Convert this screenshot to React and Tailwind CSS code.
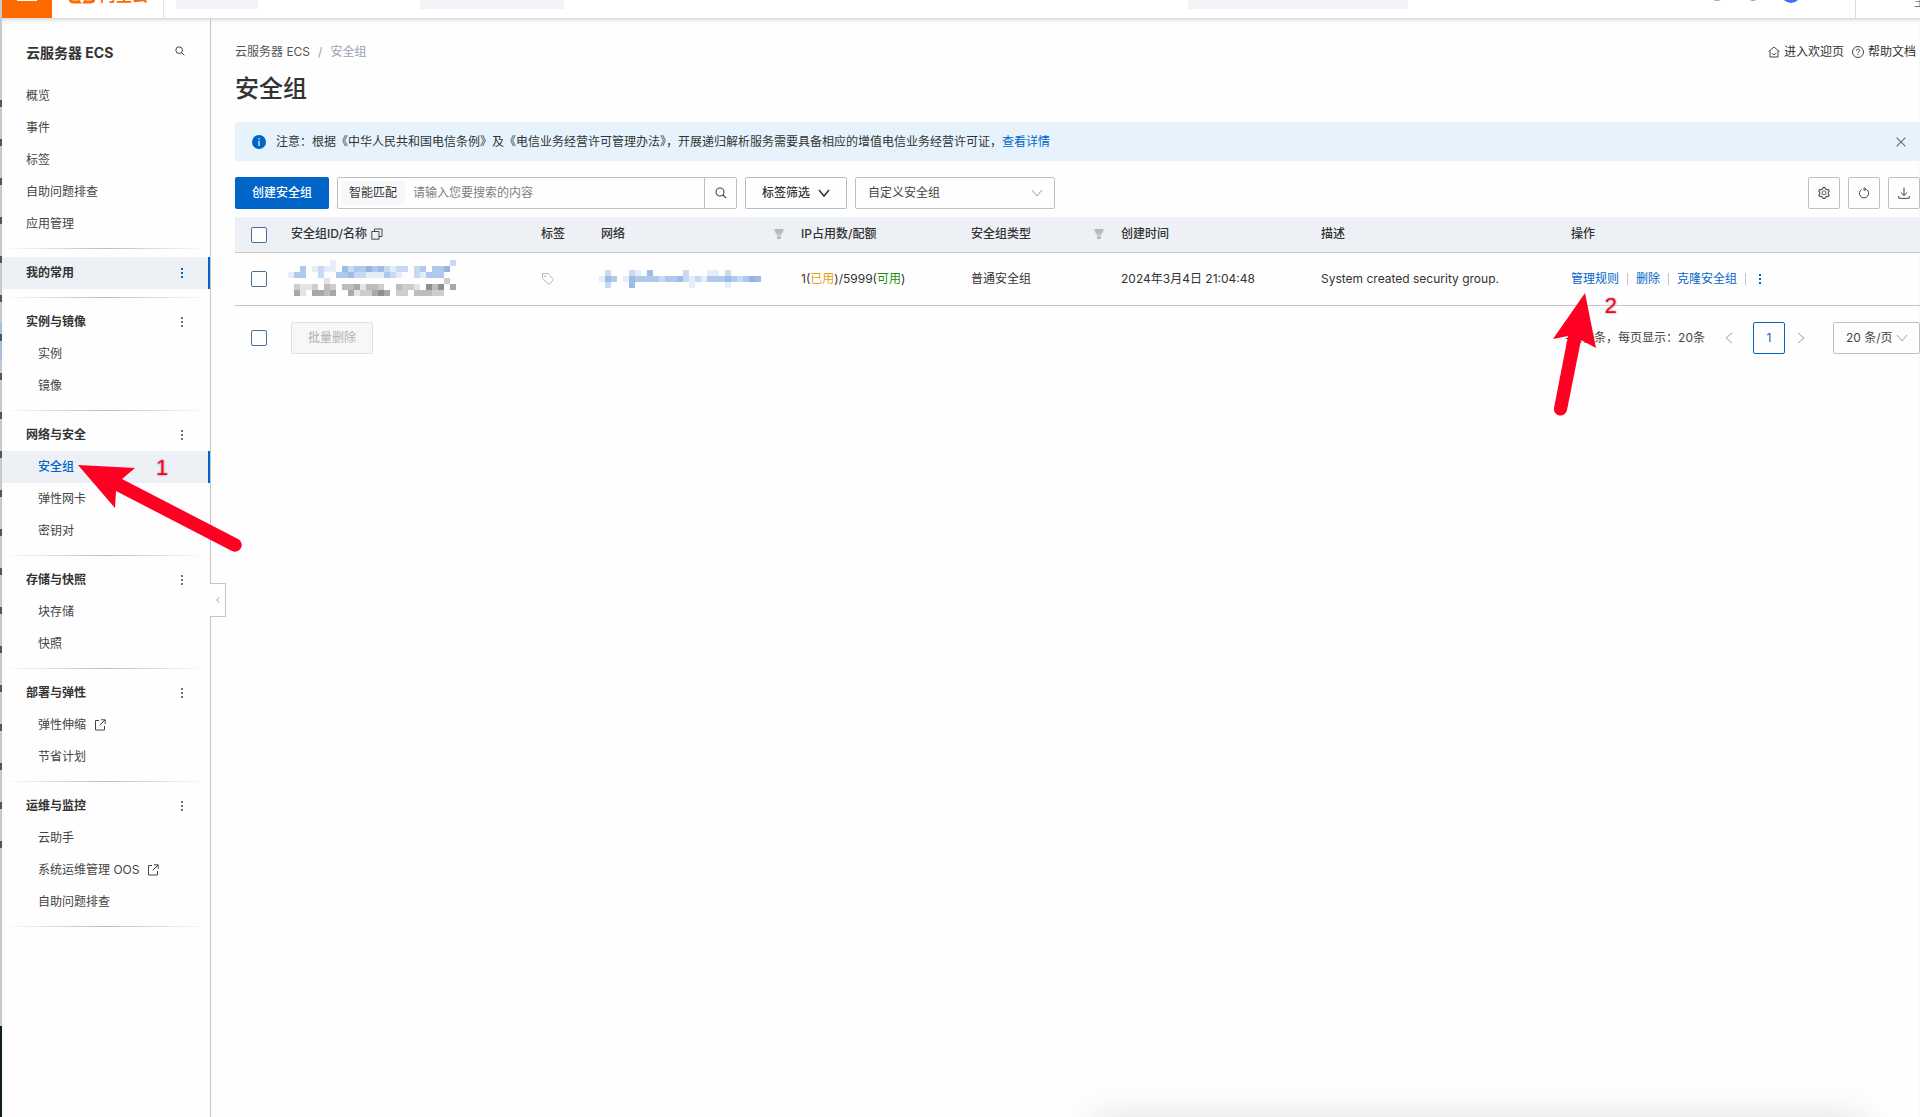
import { useState } from 'react'
import { AiOutlineSetting } from 'react-icons/ai'

const navGroups = [
  {
    items: [
      { label: '概览' },
      { label: '事件' },
      { label: '标签' },
      { label: '自助问题排查' },
      { label: '应用管理' },
    ],
  },
  { title: '我的常用', highlighted: true, items: [] },
  { title: '实例与镜像', items: [{ label: '实例' }, { label: '镜像' }] },
  {
    title: '网络与安全',
    items: [{ label: '安全组', active: true }, { label: '弹性网卡' }, { label: '密钥对' }],
  },
  { title: '存储与快照', items: [{ label: '块存储' }, { label: '快照' }] },
  { title: '部署与弹性', items: [{ label: '弹性伸缩', external: true }, { label: '节省计划' }] },
  {
    title: '运维与监控',
    items: [{ label: '云助手' }, { label: '系统运维管理 OOS', external: true }, { label: '自助问题排查' }],
  },
]

// Pixelated id cells: one string per row, one digit per 6px cell (0 = empty)
const idCells = [
  '0000000100000000000000000002',
  '0030121104233534212202303350',
  '1330020033422111321002133300',
]
const nameCells = [
  '0000001000000000000000000020',
  '0211203203341332003221053504',
  '0410443400412245402203332200',
]
const networkCells = [
  '020002104000002000110200000',
  '143014333323342121333432354',
  '020004000000000100000100000',
]

const blueScale = ['', '#e4edf9', '#c8d9f3', '#b0c8ec', '#9dbce8', '#92b4e5']
const grayScale = ['', '#e4e4e4', '#cdcdcd', '#bcbcbc', '#a8a8a8', '#8e8e8e']

function Mosaic({ cells, scale }) {
  return (
    <svg width={cells[0].length * 6} height={cells.length * 6} className="block" aria-hidden="true">
      {cells.map((row, y) =>
        row.split('').map((level, x) =>
          level === '0' ? null : (
            <rect key={`${x}-${y}`} x={x * 6} y={y * 6} width="6" height="6" fill={scale[Number(level)]} />
          )
        )
      )}
    </svg>
  )
}

function SearchIcon({ size = 12 }) {
  return (
    <svg width={size} height={size} viewBox="0 0 12 12" fill="none" stroke="currentColor" strokeWidth="1.1">
      <circle cx="5" cy="5" r="4" />
      <path d="M8 8l3.2 3.2" />
    </svg>
  )
}

function Chevron({ direction = 'down', size = 12, strokeWidth = 1 }) {
  const paths = {
    down: 'M1 3l5 6 5-6',
    left: 'M9 1L3 6l6 5',
    right: 'M3 1l6 5-6 5',
  }
  return (
    <svg width={size} height={size} viewBox="0 0 12 12" fill="none" stroke="currentColor" strokeWidth={strokeWidth}>
      <path d={paths[direction]} />
    </svg>
  )
}

function Dots({ className }) {
  return (
    <svg width="2" height="10" viewBox="0 0 2 10" className={className} fill="currentColor">
      <rect width="2" height="2" />
      <rect y="4" width="2" height="2" />
      <rect y="8" width="2" height="2" />
    </svg>
  )
}

function ExternalIcon() {
  return (
    <svg width="12" height="12" viewBox="0 0 12 12" fill="none" stroke="currentColor">
      <path d="M5 1.5H1.5v9.5H10.5V7M7 .8h4.2V5M11 1L5.8 6.2" />
    </svg>
  )
}

function FilterIcon() {
  return (
    <svg width="10" height="10" viewBox="0 0 10 10" fill="#b9b9b9">
      <path d="M0 0h10L8 4.800H2zM2.800 5h4.400v1.500H2.800zM3 7.200h4V10H3z" />
    </svg>
  )
}

function Checkbox({ label }) {
  return (
    <input
      type="checkbox"
      aria-label={label}
      className="block size-4 appearance-none rounded-xs border border-[#4a7099] bg-white checked:bg-[#0064c8]"
    />
  )
}

function TopBar() {
  return (
    <header className="relative z-10 h-[19px] overflow-hidden border-b border-[#dcdcdc] bg-white">
      <div className="-mt-8 flex h-[50px] items-center">
        <button aria-label="菜单" className="flex size-[50px] shrink-0 items-center justify-center bg-[#ff6a00]">
          <svg width="20" height="16" viewBox="0 0 20 16" fill="#fff">
            <rect width="20" height="2" />
            <rect y="7" width="20" height="2" />
            <rect y="14" width="20" height="2" />
          </svg>
        </button>
        <div className="flex h-full w-28 shrink-0 items-center gap-1 border-r border-[#e3e3e3] pt-1 pl-4 text-[#ff6a00]">
          <svg width="28" height="18" viewBox="0 0 28 18" fill="none" stroke="currentColor" strokeWidth="3">
            <path d="M11 2H6C3.500 2 2 4 2 6v6c0 2.500 1.500 4 4 4h5l-1-1.500M17 2h5c2.500 0 4 2 4 4v6c0 2.500-1.500 4-4 4h-5l1-1.500" />
          </svg>
          <span className="text-base font-bold whitespace-nowrap">阿里云</span>
        </div>
        <div className="ml-3 h-8 w-[82px] shrink-0 bg-[#f2f3f6]" />
        <div className="ml-[162px] h-8 w-36 shrink-0 bg-[#f2f3f6]" />
        <div className="ml-auto h-8 w-[220px] shrink-0 bg-[#f2f3f6]" />
        <div className="ml-[301px] size-4 shrink-0 rounded-full border border-gray-400" />
        <div className="ml-5 size-4 shrink-0 rounded-full border border-gray-400" />
        <div className="ml-5 size-5 shrink-0 rounded-full bg-[#3f6bff]" />
        <div className="ml-[54px] flex h-full w-[65px] shrink-0 items-end overflow-hidden border-l border-[#dcdcdc] pb-2 pl-[58px] text-xs text-gray-500">
          <span className="whitespace-nowrap">主</span>
        </div>
      </div>
    </header>
  )
}

function NavGroup({ group }) {
  const titleClass = group.highlighted
    ? 'border-r-2 border-[#0064c8] bg-[#edf0f5]'
    : 'border-r-2 border-transparent'

  return (
    <section>
      {group.title && (
        <div className={`flex h-8 items-center justify-between pr-[25px] pl-6 ${titleClass}`}>
          <h2 className="font-bold text-[#333]">{group.title}</h2>
          <button aria-label={`${group.title}更多`} className={group.highlighted ? 'text-[#0064c8]' : 'text-gray-500'}>
            <Dots />
          </button>
        </div>
      )}
      <ul>
        {group.items.map(item => (
          <li key={item.label}>
            <a
              href="#"
              className={`flex h-8 items-center gap-2 border-r-2 ${group.title ? 'pl-9' : 'pl-6'} ${
                item.active ? 'border-[#0064c8] bg-[#edf0f5] font-medium text-[#0064c8]' : 'border-transparent text-[#444]'
              }`}
            >
              {item.label}
              {item.external && <ExternalIcon />}
            </a>
          </li>
        ))}
      </ul>
    </section>
  )
}

function Sidebar() {
  return (
    <aside className="relative w-[209px] shrink-0 border-r border-[#c4c4c4]">
      <div className="flex items-center justify-between pt-[19px] pr-[25px] pb-3 pl-6">
        <h1 className="text-sm leading-[30px] font-bold text-[#333]">云服务器 ECS</h1>
        <button aria-label="搜索" className="pb-1 text-[#333]">
          <SearchIcon size={10} />
        </button>
      </div>
      <nav>
        {navGroups.map((group, index) => (
          <div key={index}>
            <div className={index === 0 ? 'pb-2' : 'py-2'}>
              <NavGroup group={group} />
            </div>
            <div className="h-px bg-linear-to-r from-transparent via-[#bdbdbd] to-transparent" />
          </div>
        ))}
      </nav>
      <button
        aria-label="收起"
        className="absolute top-[564px] left-full flex h-[34px] w-4 items-center justify-center border border-l-0 border-[#c4c4c4] bg-white text-gray-400"
      >
        <Chevron direction="left" size={6} strokeWidth={2} />
      </button>
    </aside>
  )
}

function PageHeader() {
  return (
    <div className="pt-[23px]">
      <div className="flex items-center justify-between pr-1">
        <nav className="flex gap-2 leading-5 text-[#555]">
          <a href="#">云服务器 ECS</a>
          <span className="text-gray-400">/</span>
          <span className="text-gray-400">安全组</span>
        </nav>
        <div className="flex gap-2 leading-5 text-[#333]">
          <a href="#" className="flex items-center gap-1">
            <svg width="12" height="12" viewBox="0 0 12 12" fill="none" stroke="currentColor" strokeWidth="0.9">
              <path d="M.6 5.600L6 1l5.400 4.600M2 4.800v6.200h8V4.800M4 7.200c.6 1.800 3.400 1.800 4 0" />
            </svg>
            进入欢迎页
          </a>
          <a href="#" className="flex items-center gap-1">
            <svg width="12" height="12" viewBox="0 0 12 12" fill="none" stroke="currentColor" strokeWidth="0.9">
              <circle cx="6" cy="6" r="5.500" />
              <path d="M4.300 4.800c0-2.300 3.400-2.200 3.400-.1C7.700 6 6 6 6 7.300M6 8.200v1" />
            </svg>
            帮助文档
          </a>
        </div>
      </div>
      <h2 className="mt-[11px] text-2xl leading-8 font-medium text-[#333]">安全组</h2>
    </div>
  )
}

function Notice({ onClose }) {
  return (
    <div className="mt-[17px] flex h-[39px] items-center rounded-xs bg-[#e6f3fd] pr-3 pl-[17px] text-[#333]">
      <svg width="14" height="14" viewBox="0 0 14 14" className="mr-[10px] shrink-0">
        <circle cx="7" cy="7" r="7" fill="#0064c8" />
        <path d="M6.300 3h1.400v1.500H6.300zM6.300 5.700h1.400V11H6.300z" fill="#d5e8fa" />
      </svg>
      <p className="flex-1">
        注意：根据《中华人民共和国电信条例》及《电信业务经营许可管理办法》，开展递归解析服务需要具备相应的增值电信业务经营许可证，
        <a href="#" className="text-[#0064c8]">查看详情</a>
      </p>
      <button aria-label="关闭" onClick={onClose} className="p-0.5 text-gray-500">
        <svg width="10" height="10" viewBox="0 0 10 10" fill="none" stroke="currentColor" strokeWidth="1.3">
          <path d="M.6.6l8.800 8.800M9.400.6L.6 9.400" />
        </svg>
      </button>
    </div>
  )
}

function Toolbar() {
  const iconButton = 'flex size-8 items-center justify-center rounded-xs border border-[#c0c0c0] text-[#444]'

  return (
    <div className="mt-4 flex items-center gap-2">
      <button className="h-8 rounded-xs bg-[#0064c8] px-[17px] font-medium text-white">创建安全组</button>
      <div className="flex h-8 w-[400px] rounded-xs border border-[#c0c0c0]">
        <label htmlFor="keyword" className="m-[3px] flex w-16 items-center justify-center bg-[#f7f8fa] text-[#333]">
          智能匹配
        </label>
        <input
          id="keyword"
          type="text"
          placeholder="请输入您要搜索的内容"
          className="min-w-0 flex-1 px-[5px] outline-none placeholder:text-[#808080]"
        />
        <button aria-label="搜索" className="flex w-8 items-center justify-center border-l border-[#c0c0c0] text-[#444]">
          <SearchIcon />
        </button>
      </div>
      <button className="flex h-8 items-center gap-2 rounded-xs border border-[#b4bcc8] px-4 font-medium text-[#333]">
        标签筛选
        <Chevron strokeWidth={1.5} />
      </button>
      <div className="relative w-[200px] text-[#444]">
        <select aria-label="安全组类型" className="h-8 w-full appearance-none rounded-xs border border-[#c0c0c0] px-3">
          <option>自定义安全组</option>
        </select>
        <span className="pointer-events-none absolute top-2.5 right-3 text-gray-400">
          <Chevron size={12} />
        </span>
      </div>
      <div className="ml-auto flex gap-2">
        <button aria-label="设置" className={iconButton}>
          <AiOutlineSetting size={14} />
        </button>
        <button aria-label="刷新" className={iconButton}>
          <svg width="12" height="12" viewBox="0 0 12 12" fill="none" stroke="currentColor">
            <path d="M3.600 2.400A4.600 4.600 0 1 0 8.600 2.500M5 2.200h3L6.300.4M8 2.200L6.300 4" />
          </svg>
        </button>
        <button aria-label="下载" className={iconButton}>
          <svg width="12" height="12" viewBox="0 0 12 12" fill="none" stroke="currentColor">
            <path d="M6 .5v8M2.800 5.400L6 8.500l3.200-3.100M.8 9v2.300h10.400V9" />
          </svg>
        </button>
      </div>
    </div>
  )
}

function GroupTable() {
  const th = 'px-2 pb-px text-left font-medium'

  return (
    <table className="mt-2 w-full table-fixed border-separate border-spacing-0 text-[#333]">
      <colgroup>
        <col className="w-12" />
        <col className="w-[250px]" />
        <col className="w-[60px]" />
        <col className="w-[200px]" />
        <col className="w-[170px]" />
        <col className="w-[150px]" />
        <col className="w-[200px]" />
        <col className="w-[250px]" />
        <col />
      </colgroup>
      <thead>
        <tr className="h-9 bg-[#edf0f5] *:border-b *:border-[#c4c4c4]">
          <th className="pl-4">
            <Checkbox label="全选" />
          </th>
          <th className={th}>
            <span className="flex items-center gap-1">
              安全组ID/名称
              <svg width="12" height="12" viewBox="0 0 12 12" fill="none" stroke="currentColor" strokeWidth="0.9">
                <path d="M3.500 3.500V1h7.500v7.500H8M.8 3.500H8v7.700H.8z" />
              </svg>
            </span>
          </th>
          <th className={th}>标签</th>
          <th className={th}>
            <span className="flex items-center justify-between pr-px">
              网络
              <FilterIcon />
            </span>
          </th>
          <th className={th}>IP占用数/配额</th>
          <th className={th}>
            <span className="flex items-center justify-between pr-px">
              安全组类型
              <FilterIcon />
            </span>
          </th>
          <th className={th}>创建时间</th>
          <th className={th}>描述</th>
          <th className={th}>操作</th>
        </tr>
      </thead>
      <tbody>
        <tr className="h-[53px] *:border-b *:border-[#c4c4c4]">
          <td className="pl-4">
            <Checkbox label="选择安全组" />
          </td>
          <td className="pb-[3px] pl-[5px]">
            <Mosaic cells={idCells} scale={blueScale} />
            <Mosaic cells={nameCells} scale={grayScale} />
          </td>
          <td className="px-2">
            <svg width="14" height="14" viewBox="0 0 14 14" fill="none" stroke="#b5b5b5">
              <path d="M1.500 1.500h5.500l5.500 6-4.500 5-6.500-6z" />
              <circle cx="4.300" cy="4.300" r=".6" />
            </svg>
          </td>
          <td className="pl-1.5">
            <Mosaic cells={networkCells} scale={blueScale} />
          </td>
          <td className="px-2">
            1(<span className="text-[#e6a117]">已用</span>)/5999(<span className="text-[#1e8e0e]">可用</span>)
          </td>
          <td className="px-2">普通安全组</td>
          <td className="px-2">2024年3月4日 21:04:48</td>
          <td className="px-2">System created security group.</td>
          <td className="px-2">
            <div className="flex items-center gap-2 text-[#0064c8]">
              <a href="#">管理规则</a>
              <span className="h-3 w-px bg-[#c4c4c4]" />
              <a href="#">删除</a>
              <span className="h-3 w-px bg-[#c4c4c4]" />
              <a href="#">克隆安全组</a>
              <span className="h-3 w-px bg-[#c4c4c4]" />
              <button aria-label="更多操作" className="px-[5px]">
                <Dots />
              </button>
            </div>
          </td>
        </tr>
      </tbody>
    </table>
  )
}

function TableFooter() {
  return (
    <div className="mt-4 flex h-8 items-center pl-4 text-[#444]">
      <Checkbox label="全选当前页" />
      <button disabled className="ml-6 h-8 rounded-xs border border-[#e0e0e0] bg-[#f7f7f7] px-4 text-[#b0b0b0]">
        批量删除
      </button>
      <span className="ml-auto">共有1条，每页显示：20条</span>
      <button aria-label="上一页" className="ml-[18px] text-gray-400">
        <Chevron direction="left" size={12} />
      </button>
      <button className="mx-[18px] size-8 rounded-xs border border-[#0064c8] text-[#0064c8]">1</button>
      <button aria-label="下一页" className="-ml-2 text-gray-400">
        <Chevron direction="right" size={12} />
      </button>
      <div className="relative ml-[26px] w-[87px]">
        <select aria-label="每页条数" className="h-8 w-full appearance-none rounded-xs border border-[#c0c0c0] pl-3">
          <option>20 条/页</option>
        </select>
        <span className="pointer-events-none absolute top-2.5 right-3 text-gray-400">
          <Chevron size={12} />
        </span>
      </div>
    </div>
  )
}

// Sliver of the window that sits behind the browser
function BackdropEdge() {
  const marks = Array.from({ length: 20 }, (_, i) => 100 + i * 39)
  return (
    <div className="relative w-0.5 shrink-0 overflow-hidden bg-[#c9c9cb]">
      <svg width="2" height="1026" className="absolute top-0 left-0">
        <rect y="322" width="2" height="39" fill="#a9bfdf" />
        {marks.map(y => (
          <rect key={y} y={y} width="2" height="7" fill="#555" />
        ))}
      </svg>
      <div className="absolute top-[1026px] bottom-0 w-full bg-[#10201a]" />
    </div>
  )
}

function Annotations() {
  const label =
    "absolute font-['Liberation_Sans',sans-serif] text-[22px] leading-6 text-[#ff0022] [text-shadow:0_0_2px_#999,0_0_2px_#bbb]"
  return (
    <div className="pointer-events-none">
      <svg width="170" height="96" viewBox="0 0 170 96" className="absolute top-[460px] left-[74px]" fill="#ff0022">
        <path d="M4 5L61 8L48 19L164 79A6.500 6.500 0 0 1 158 91L42 31L41 48Z" />
      </svg>
      <span className={`${label} top-[456px] left-[156px]`}>1</span>
      <svg width="50" height="130" viewBox="0 0 50 130" className="absolute top-[290px] right-[320px]" fill="#ff0022">
        <path d="M35 3L46 58L31 50L17 120A6.500 6.500 0 0 1 4 118L18 46L3 49Z" />
      </svg>
      <span className={`${label} top-[294px] right-[303px]`}>2</span>
    </div>
  )
}

function App() {
  const [showNotice, setShowNotice] = useState(true)

  return (
    <div className="relative flex min-h-screen overflow-hidden bg-[#fefefe] font-['Inter','Noto_Sans_CJK_SC',sans-serif] text-xs">
      <BackdropEdge />
      <div className="flex min-w-0 flex-1 flex-col">
        <TopBar />
        <div className="flex flex-1 shadow-[inset_0_3px_4px_-2px_rgba(0,0,0,0.15)]">
          <Sidebar />
          <main className="min-w-0 flex-1 pl-6">
            <PageHeader />
            {showNotice && <Notice onClose={() => setShowNotice(false)} />}
            <Toolbar />
            <GroupTable />
            <TableFooter />
          </main>
        </div>
      </div>
      <Annotations />
      <div className="absolute top-full right-14 left-[57%] h-10 shadow-[0_0_36px_rgba(0,0,0,0.12)]" />
    </div>
  )
}

export default App
